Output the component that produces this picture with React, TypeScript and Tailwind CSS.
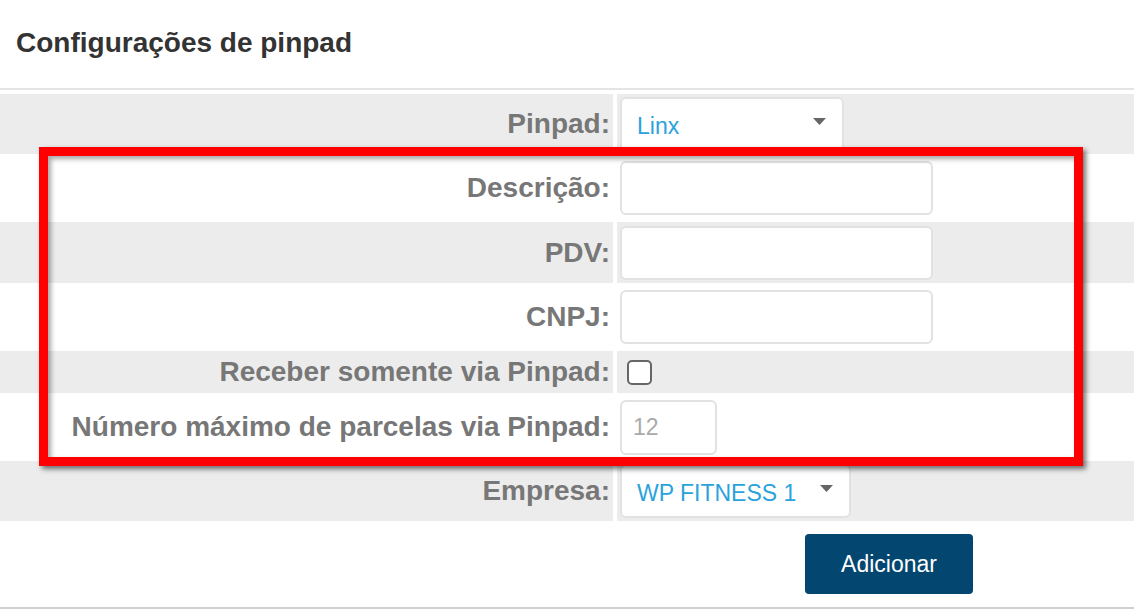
import { ReactNode } from 'react';

const font = { fontFamily: '"Liberation Sans", Arial, sans-serif' };

const Row = ({
  label,
  gray = false,
  height = 'h-[60px]',
  children,
}: {
  label: string;
  gray?: boolean;
  height?: string;
  children: ReactNode;
}) => (
  <div className={`flex gap-1 ${height}`}>
    <div
      className={`flex w-[613px] shrink-0 items-center justify-end pr-[3px] text-[28px] leading-8 font-bold text-[#777777] ${
        gray ? 'bg-[#ececec]' : 'bg-white'
      }`}
    >
      {label}
    </div>
    <div className={`flex flex-1 items-center pl-[3px] ${gray ? 'bg-[#ececec]' : 'bg-white'}`}>{children}</div>
  </div>
);

const Select = ({ value, width }: { value: string; width: string }) => (
  <div
    className={`flex h-[54px] items-center justify-between rounded-[6px] border-2 border-[#e2e2e2] bg-white pr-[16px] pl-[15px] ${width}`}
  >
    <span className="pt-[5px] text-[23px] text-[#2aa3dc]">{value}</span>
    <svg width="13" height="7" viewBox="0 0 13 7" className="mb-[6px]">
      <path d="M0 0 H13 L6.5 7 Z" fill="#666666" />
    </svg>
  </div>
);

const TextInput = ({ width = 'w-[313px]' }: { width?: string }) => (
  <div className={`h-[54px] rounded-[6px] border-2 border-[#e2e2e2] bg-white ${width}`} />
);

const App = () => {
  return (
    <div className="relative h-[610px] w-[1134px] overflow-hidden bg-white" style={font}>
      <div className="h-[88px] pt-[27px] pl-4 text-[28px] leading-8 font-bold text-[#333333]">
        Configurações de pinpad
      </div>
      <div className="h-[2px] bg-[#e4e4e4]" />
      <div className="mt-1 flex flex-col gap-1">
        <Row label="Pinpad:" gray>
          <Select value="Linx" width="w-[224px]" />
        </Row>
        <Row label="Descrição:">
          <TextInput />
        </Row>
        <Row label="PDV:" gray height="h-[61px]">
          <TextInput />
        </Row>
        <Row label="CNPJ:">
          <TextInput />
        </Row>
        <Row label="Receber somente via Pinpad:" gray height="h-[42px]">
          <span className="ml-[7px] h-[25px] w-[25px] rounded-[5px] border-2 border-[#666666] bg-white" />
        </Row>
        <Row label="Número máximo de parcelas via Pinpad:">
          <div className="flex h-[55px] w-[97px] items-center rounded-[6px] border-2 border-[#e2e2e2] bg-white pl-[11px] text-[23px] text-[#aaaaaa]">
            12
          </div>
        </Row>
        <Row label="Empresa:" gray>
          <Select value="WP FITNESS 1" width="w-[231px]" />
        </Row>
      </div>
      <div className="flex h-[88px] items-center border-b-2 border-[#d0d0d0] pl-[805px]">
        <button className="h-[60px] w-[168px] rounded-[4px] bg-[#03466f] text-[23px] text-white">Adicionar</button>
      </div>
      <div className="pointer-events-none absolute top-[147px] left-[39px] h-[319px] w-[1044px] border-[9px] border-[#ff0000] shadow-[3px_3px_5px_rgba(0,0,0,0.55),inset_3px_3px_5px_rgba(0,0,0,0.35)]" />
    </div>
  );
};

export default App;
